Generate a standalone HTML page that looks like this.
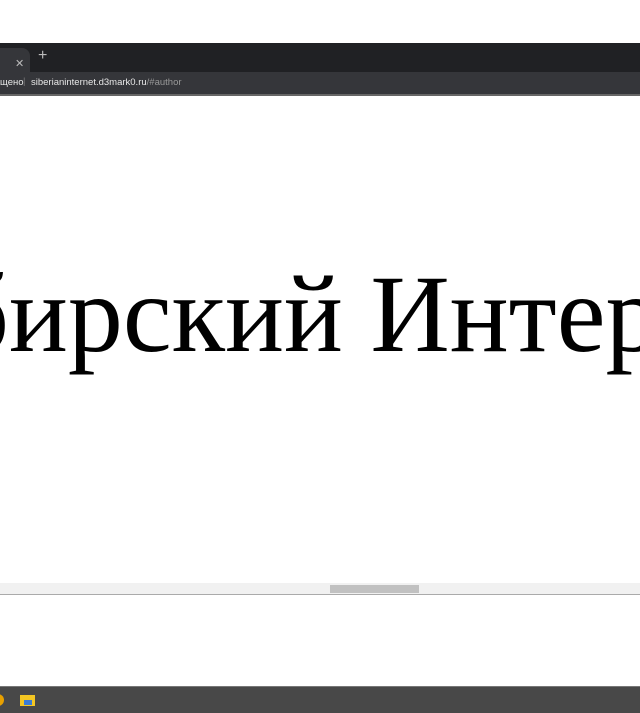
<!DOCTYPE html>
<html><head><meta charset="utf-8"><style>
html,body{margin:0;padding:0;width:640px;height:713px;overflow:hidden;background:#fff;position:relative;font-family:"Liberation Sans",sans-serif}
.tabs{position:absolute;left:0;top:43px;width:640px;height:29px;background:#202124}
.tab{position:absolute;left:0;top:5px;width:30px;height:24px;background:#35363a;border-radius:0 8px 0 0}
.x{position:absolute;left:15px;top:9px;color:#bbb;font-size:11px}
.plus{position:absolute;left:38px;top:4px;color:#bbb;font-size:16px}
.addr{position:absolute;left:0;top:72px;width:640px;height:22px;background:#35363a}
.addr span{position:absolute;top:5px;font-size:9.5px;color:#e8e8e8}
.shadow{position:absolute;left:0;top:94px;width:640px;height:2px;background:#666}
.clip{position:absolute;left:0;top:96px;width:640px;height:487px;overflow:hidden}
.title{position:absolute;left:-47px;top:152px;font-family:"Liberation Serif",serif;font-size:110px;white-space:nowrap;color:#000;line-height:1.2}
.sb{position:absolute;left:0;top:583px;width:640px;height:11px;background:#f1f1f1;border-bottom:1px solid #aaa}
.thumb{position:absolute;left:330px;top:585px;width:89px;height:8px;background:#c1c1c1}
.task{position:absolute;left:0;top:686px;width:640px;height:27px;background:#484848;border-top:1px solid #777;overflow:hidden}
</style></head><body>
<div class="tabs"><div class="tab"><span class="x">✕</span></div><span class="plus">+</span></div>
<div class="addr"><span style="left:0">щено</span><span style="left:23px;top:4px;color:#777">|</span><span style="left:31px">siberianinternet.d3mark0.ru<span style="position:static;color:#999">/#author</span></span></div>
<div class="shadow"></div>
<div class="clip"><div class="title">бирский Интернет</div></div>
<div class="sb"></div><div class="thumb"></div>
<div class="task">
<div style="position:absolute;left:-5px;top:7px;width:9px;height:12px;border-radius:0 6px 6px 0;background:#e8a000"></div>
<div style="position:absolute;left:20px;top:8px;width:15px;height:11px;background:#f3c623"></div>
<div style="position:absolute;left:24px;top:13px;width:8px;height:5px;background:#3a7bd5"></div>
</div>
</body></html>
